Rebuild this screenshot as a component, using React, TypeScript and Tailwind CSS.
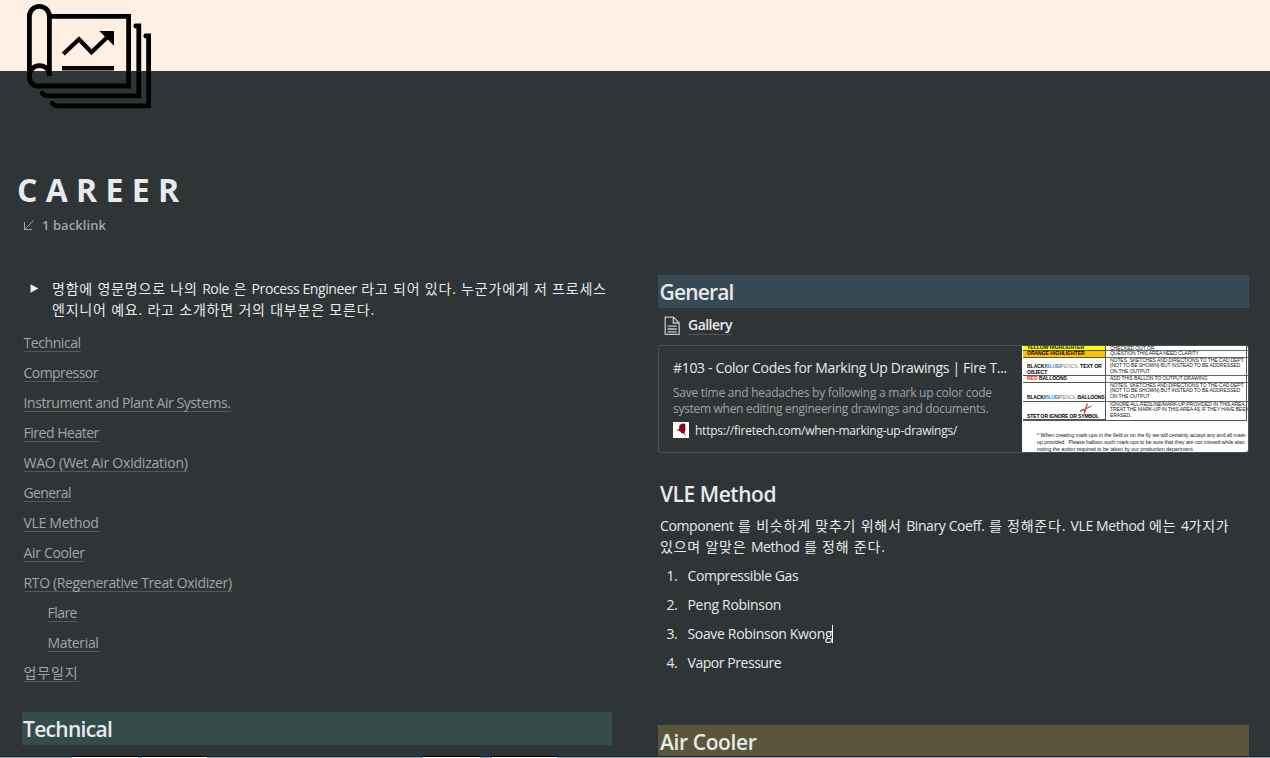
import { ReactNode } from 'react';

interface TocEntry {
  label: string;
  className: string;
}

const toc: TocEntry[] = [
  { label: 'Technical', className: 'tracking-[-0.42px]' },
  { label: 'Compressor', className: 'tracking-[-0.55px]' },
  { label: 'Instrument and Plant Air Systems.', className: 'tracking-[-0.43px]' },
  { label: 'Fired Heater', className: 'tracking-[-0.48px]' },
  { label: 'WAO (Wet Air Oxidization)', className: 'tracking-[-0.21px]' },
  { label: 'General', className: 'tracking-[-0.6px]' },
  { label: 'VLE Method', className: 'tracking-[-0.3px]' },
  { label: 'Air Cooler', className: 'tracking-[-0.33px]' },
  { label: 'RTO (Regenerative Treat Oxidizer)', className: 'tracking-[-0.35px]' },
  { label: 'Flare', className: 'ml-6 tracking-[-0.55px]' },
  { label: 'Material', className: 'ml-6 tracking-[-0.35px]' },
  { label: '업무일지', className: 'tracking-[0.87px]' },
];

const methods: TocEntry[] = [
  { label: 'Compressible Gas', className: 'tracking-[-0.42px]' },
  { label: 'Peng Robinson', className: 'tracking-[-0.3px]' },
  { label: 'Soave Robinson Kwong', className: 'tracking-[-0.34px]' },
  { label: 'Vapor Pressure', className: 'tracking-[-0.45px]' },
];

// Latin words inside a Korean paragraph
function En({ children }: { children: ReactNode }) {
  return <span className="tracking-[-0.4px]">{children}</span>;
}

function PageIcon() {
  return (
    <svg
      className="absolute left-[24px] top-0 z-10"
      width="130"
      height="112"
      viewBox="24 0 130 112"
      fill="none"
      stroke="#000"
      strokeWidth="4.8"
    >
      <path d="M49.4 76V16.2a10 9.8 0 0 0-20 0V77c0 5.2 3.9 9 9 9h90.2V16.3H50" />
      <path d="M29.4 76.5c0-6.5 4.2-10.800 10-10.800s10 4 10 10.300" />
      <path d="M135.800 26h3v69.800H48.500q-4 0-6.300-2.700" strokeLinecap="round" />
      <path d="M145.800 36h2.800v69.800H58.500q-4 0-6.300-2.500" strokeLinecap="round" />
      <path d="M63.300 54 79 39.300l12.500 13L109 35.500" strokeWidth="4.3" />
      <path d="M99.300 31H114v14.700z" fill="#000" stroke="none" />
      <path d="M62 68.200h52" strokeWidth="4.5" />
    </svg>
  );
}

function Thumbnail() {
  const left = 'flex items-end border-r border-[#555] pl-[4px] font-bold whitespace-nowrap tracking-[-0.07px]';
  const right = 'pl-[4px] whitespace-nowrap text-[#222] tracking-[-0.13px]';
  return (
    <div className="h-[106px] w-[226px] shrink-0 overflow-hidden rounded-r-[2px] bg-white font-['Liberation_Sans',Arial,sans-serif] text-[5.1px] leading-[6.1px] text-black">
      <div className="ml-px grid w-[224px] grid-cols-[83px_1fr] grid-rows-[5px_6.5px_18.5px_6.5px_19px_18.5px] divide-y divide-[#666] border-r border-b border-[#555]">
        <div className={`${left} bg-[#ffff00] leading-[5px]`}>YELLOW HIGHLIGHTER</div>
        <div className={`${right} leading-[5px]`}>CHECKED OUT OR</div>
        <div className={`${left} bg-[#ffc000] leading-[5.5px]`}>ORANGE HIGHLIGHTER</div>
        <div className={`${right} leading-[5.5px]`}>QUESTION THIS AREA NEED CLARITY</div>
        <div className={left}>
          <p>
            BLACK/<span className="text-[#2e86d0]">BLUE</span>/
            <span className="font-normal text-[#888]">PENCIL</span> TEXT OR
            <br />
            OBJECT
          </p>
        </div>
        <div className={`${right} leading-[5.9px]`}>
          NOTES, SKETCHES AND DIRECTIONS TO THE CAD DEPT.
          <br />
          (NOT TO BE SHOWN) BUT INSTEAD TO BE ADDRESSED
          <br />
          ON THE OUTPUT
        </div>
        <div className={`${left} leading-[5.5px]`}>
          <p>
            <span className="text-[#ff2020]">RED</span> BALLOONS
          </p>
        </div>
        <div className={`${right} leading-[5.5px]`}>ADD THIS BALLON TO OUTPUT DRAWING</div>
        <div className={left}>
          <p className="tracking-[-0.21px]">
            BLACK/<span className="text-[#2e86d0]">BLUE</span>/
            <span className="font-normal text-[#888]">PENCIL</span> BALLOONS
          </p>
        </div>
        <div className={`${right} leading-[5.9px]`}>
          NOTES, SKETCHES AND DIRECTIONS TO THE CAD DEPT.
          <br />
          (NOT TO BE SHOWN) BUT INSTEAD TO BE ADDRESSED
          <br />
          ON THE OUTPUT
        </div>
        <div className={`${left} relative`}>
          <p className="tracking-[-0.17px]">STET OR IGNORE OR SYMBOL</p>
          <svg className="absolute left-[56px] top-[1px]" width="14" height="12" viewBox="0 0 14 12" fill="none" stroke="#c0504d" strokeWidth="1.3">
            <path d="M1 8.500 12.500 3M5 10.500 8.500.5M1 8.500l2.500-2 3 1.500-1.500 2.500" />
          </svg>
        </div>
        <div className={`${right} leading-[5.9px]`}>
          IGNORE ALL REDLINE/MARK-UP PROVIDED IN THIS AREA.
          <br />
          TREAT THE MARK-UP IN THIS AREA AS IF THEY HAVE BEEN
          <br />
          ERASED.
        </div>
      </div>
      <p className="ml-[15px] mt-[11px] whitespace-nowrap text-[5.4px] leading-[6.8px] tracking-[-0.08px] text-[#222]">
        * When creating mark-ups in the field or on the fly we will certainly accept any and all mark-
        <br />
        up provided.&nbsp; Please balloon such mark-ups to be sure that they are not missed while also
        <br />
        noting the action required to be taken by our production department.
      </p>
    </div>
  );
}

function Bookmark() {
  return (
    <div className="mt-[9px] flex h-[108px] rounded-[3px] border border-[#4c5053]">
      <div className="min-w-0 flex-1 whitespace-nowrap pl-[14px] pt-[11px]">
        <div className="text-[14px] leading-[21px] tracking-[-0.33px]">
          #103 - Color Codes for Marking Up Drawings | Fire T...
        </div>
        <div className="mt-[7px] text-[12px] leading-[16px] text-[#a0a2a3]">
          <p className="tracking-[-0.26px]">Save time and headaches by following a mark up color code</p>
          <p className="tracking-[-0.3px]">system when editing engineering drawings and documents.</p>
        </div>
        <div className="mt-[5px] flex h-4 items-center gap-[6px]">
          <svg width="16" height="16" viewBox="0 0 16 16">
            <path d="M0 0h16v16H0z" fill="#fff" />
            <path d="M6.500 3 9.500 1.500l2.700.3.300 5.700-1 3.500 1.800 3.700-2.600-3.200-2.200-.3-1-1.400-2.200-1.200L2.800 7.800l3.200-.6z" fill="#7a0c1c" />
          </svg>
          <span className="pt-[1px] text-[12px] leading-4 tracking-[-0.25px]">https://firetech.com/when-marking-up-drawings/</span>
        </div>
      </div>
      <Thumbnail />
    </div>
  );
}

export default function App() {
  return (
    <div className="flex h-[758px] w-[1270px] flex-col overflow-hidden bg-[#2f3437] font-['Open_Sans','Noto_Sans_CJK_KR',sans-serif] text-[14px] leading-[21px] text-[#e9eaea]">
      <div className="relative h-[71px] shrink-0 bg-[#ffeee2]">
        <PageIcon />
      </div>

      <header className="h-[204px] shrink-0 pl-[17px] pt-[98px]">
        <h1 className="text-[32px] font-bold leading-[42px]">C A R E E R</h1>
        <div className="mt-[4px] flex items-center gap-[7px] pl-[6px] text-[13px] font-semibold leading-5 tracking-[0.07px] text-[#a3a5a6]">
          <svg width="12" height="12" viewBox="0 0 12 12" fill="none" stroke="currentColor">
            <path d="M10.500 1.500 1.500 10.500M1.500 3v7.500h7.500" />
          </svg>
          1 backlink
        </div>
      </header>

      <main className="flex min-h-0 flex-1 gap-[46px] overflow-hidden pl-[22px]">
        <section className="w-[590px]">
          <div className="flex pt-[3px]">
            <div className="flex w-[30px] shrink-0 pl-[8px] pt-[6px]">
              <svg width="9" height="9" viewBox="0 0 9 9" fill="currentColor">
                <path d="M.5.3 8.500 4.500.5 8.700z" />
              </svg>
            </div>
            <p className="whitespace-nowrap tracking-[0.8px]">
              명함에 영문명으로 나의 <En>Role</En> 은 <En>Process Engineer</En> 라고 되어 있다. 누군가에게 저 프로세스
              <br />
              엔지니어 예요. 라고 소개하면 거의 대부분은 모른다.
            </p>
          </div>

          <nav className="mt-[8px] pl-[1.5px] text-[#a3a5a6]">
            {toc.map((entry) => (
              <div key={entry.label} className="flex h-[30px] items-start pt-[6px]">
                <a className={`h-[18px] border-b border-[#54585b] leading-[18px] ${entry.className}`}>{entry.label}</a>
              </div>
            ))}
          </nav>

          <h2 className="mt-[24px] h-[33px] bg-[#354c4b] pl-[1px] text-[21px] font-semibold leading-[34px] tracking-[-0.7px]">
            Technical
          </h2>
        </section>

        <section className="w-[591px]">
          <h2 className="h-[33px] bg-[#364954] pl-[1.5px] text-[21px] font-semibold leading-[34px] tracking-[-0.84px]">
            General
          </h2>
          <div className="mt-[7px] flex h-[21px] items-center gap-[7px] pl-[6px]">
            <svg width="17" height="20" viewBox="0 0 17 20" fill="none" stroke="#c3c5c6" strokeWidth="1.3">
              <path d="M1.200 1.200h8.300l5.700 5.700v11.400h-14zM9.300 1.200V7h5.900M3.500 10.200h9.300M3.500 13h9.300M3.500 15.800h9.300" />
            </svg>
            <a className="h-[19px] border-b border-[#54585b] font-semibold leading-[18px] tracking-[-0.53px]">Gallery</a>
          </div>
          <Bookmark />

          <h2 className="mt-[24px] h-[33px] pl-[2px] text-[21px] font-semibold leading-[34px] tracking-[-0.46px]">
            VLE Method
          </h2>
          <p className="mt-[5px] whitespace-nowrap pl-[2px] tracking-[0.79px]">
            <En>Component</En> 를 비슷하게 맞추기 위해서 <En>Binary Coeff.</En> 를 정해준다. <En>VLE Method</En> 에는 <En>4</En>가지가
            <br />
            있으며 알맞은 <En>Method</En> 를 정해 준다.
          </p>
          <ol className="mt-[4px]">
            {methods.map((method, i) => (
              <li key={method.label} className="flex h-[29px] items-center">
                <span className="w-[29.500px] pl-[8.500px] tracking-[-0.4px]">{i + 1}.</span>
                <span className={method.className}>{method.label}</span>
                {i === 2 && <span className="h-[18px] w-px bg-white" />}
              </li>
            ))}
          </ol>
          <h2 className="mt-[48px] h-[33px] bg-[#59563b] pl-[2px] text-[21px] font-semibold leading-[34px] tracking-[-0.38px]">
            Air Cooler
          </h2>
        </section>
      </main>

      <div className="flex h-[2px] shrink-0 border-b border-[#91a8be] bg-[#1d2733]">
        <div className="ml-[72px] h-[2px] w-[66px] border-b border-white bg-black" />
        <div className="ml-[4px] h-[2px] w-[65px] border-b border-white bg-black" />
        <div className="ml-[216px] h-[2px] w-[57px] border-b border-white bg-black" />
        <div className="ml-[12px] h-[2px] w-[65px] border-b border-white bg-black" />
      </div>
    </div>
  );
}
